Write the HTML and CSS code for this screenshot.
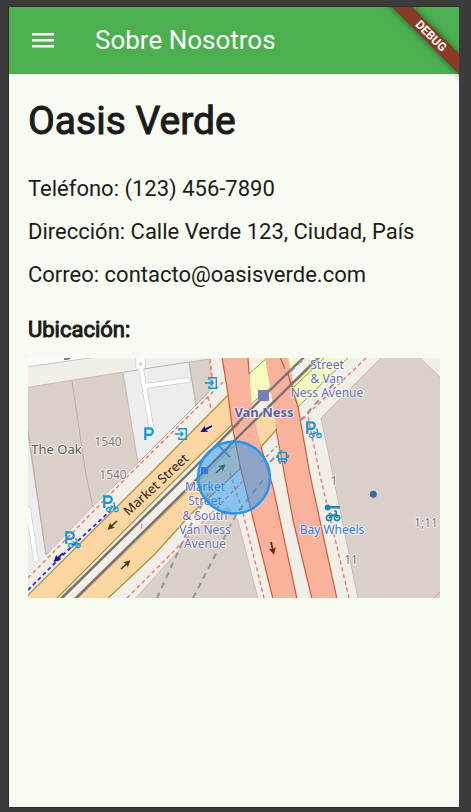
FILE: index.html
```html
<!DOCTYPE html>
<html lang="es">
<head>
<meta charset="utf-8">
<meta name="viewport" content="width=device-width, initial-scale=1">
<title>Sobre Nosotros</title>
<link rel="stylesheet" href="styles.css">
</head>
<body>
<div class="app">
  <header class="app-bar">
    <button class="menu-button" type="button" aria-label="Abrir menú">
      <svg width="22" height="16" viewBox="0 0 22 16" aria-hidden="true"><path d="M0 1h22v2.500H0zM0 7h22v2.500H0zM0 13h22v2.500H0z" fill="#fff"/></svg>
    </button>
    <div class="app-title">Sobre Nosotros</div>
  </header>
  <div class="debug-banner">DEBUG</div>
  <main class="content">
    <h1 class="name">Oasis Verde</h1>
    <div class="details">
      <p>Teléfono: (123) 456-7890</p>
      <p>Dirección: Calle Verde 123, Ciudad, País</p>
      <p>Correo: contacto@oasisverde.com</p>
    </div>
    <h2 class="section-title">Ubicación:</h2>
    <svg class="map" viewBox="28 358 412 240" preserveAspectRatio="xMidYMid slice" role="img" aria-label="Mapa de la ubicación">
      <defs>
        <g id="parking"><path d="M1.300 13V1.300h4.200a3.300 3.300 0 0 1 0 6.600H1.300" fill="none" stroke="#1296db" stroke-width="2.200"/></g>
        <g id="bike" fill="none" stroke="#1296db" stroke-width="1.200"><circle cx="2.800" cy="6.500" r="2.200"/><circle cx="10" cy="6.500" r="2.200"/><path d="M3 6.500 8.500 2.500 10 6.500M4.500 2.500 7 4M8 0l.500 2.500M7 0h2"/></g>
        <g id="entrance" fill="none" stroke="#1296db" stroke-width="1.400"><path d="M4 3V.700h7.300v10.600H4V9M0 6h8M5.500 3.500 8 6 5.500 8.500"/></g>
        <g id="arrow"><path d="M0 0h8" stroke="currentColor" stroke-width="1.700"/><path d="M6-3.500 13 0 6 3.500 7.500 0z" fill="currentColor"/></g>
      </defs>
      <rect x="28" y="358" width="412" height="240" fill="#f2efe9"/>

      <!-- Blocks and buildings -->
      <path d="M27 357h69L27 367z" fill="#fff" stroke="#c9c5c0"/>
      <path d="M28 430 46 555 28 573z" fill="#ededee"/>
      <path d="M124 372 189 362l7 43-58 58z" fill="#ededee"/>
      <g fill="#d9d0c9" stroke="#c9bcb1">
        <path d="M27 387.500 123 372l15 91-46 44-46 48-19-127z"/>
        <path d="M189 362 209 359l4 28-17 18z"/>
        <path d="M321 418 382 357h37l22 21v221h-83l-25-124z"/>
        <path d="M135 599 198 529l30-22 10 14 20 78z"/>
      </g>
      <path d="m72 381 14 94 7 32M28 430l18 125M434 598l6-6" fill="none" stroke="#c2ada1"/>
      <path d="M189 362l7 43M124 372l65-10M209 392l-71 71" fill="none" stroke="#b9b5b1"/>
      <g fill="none" stroke-linecap="round">
        <path d="m140 358 1 10 10 58m-6-40 43-6M28 509l8 51" stroke="#cfcfcf" stroke-width="5.500"/>
        <path d="M140.500 354v12" stroke="#cfcfcf" stroke-width="10"/>
        <path d="M140.500 354v12" stroke="#fff" stroke-width="8.500"/>
        <path d="m140 358 1 10 10 58m-6-40 43-6M28 509l8 51" stroke="#fff" stroke-width="4"/>
      </g>
      <circle cx="140.500" cy="364" r="2" fill="#ded5cf"/>

      <!-- Market Street -->
      <g fill="#fcd6a4" stroke="#b69035" stroke-width="1.300">
        <path d="M20 603 150 474 232 391v34l-37 35L51 604z"/>
        <path d="M66 602 240 435v34l-49 45-36 40-52 49z"/>
        <path d="M250 422 277 397v32l-16 18z"/>
      </g>
      <path d="m249 374 19-17 6 27-25 22z" fill="#f7fabf" stroke="#9b9d36"/>
      <path d="M286 357h63l-51 50-12-15z" fill="#f7fabf" stroke="#9b9d36"/>
      <path d="M288 374 303 357M294 387l31-30" stroke="#8d963a" fill="none"/>
      <path d="M246 430 320 358" fill="none" stroke="#b69035"/>
      <path d="M65 600 236 434 311 358" fill="none" stroke="#f2efe9" stroke-width="9"/>

      <!-- Van Ness Avenue -->
      <g fill="#f9b29c">
        <path d="M222 357h26l4 50 9 40 12 40 24 112h-24l-32-129-9-45-4-31z"/>
        <path d="M265 357h23l10 50 12 68 27 124h-25l-19-79-16-91z"/>
      </g>
      <path d="m222 357 6 37 4 31 9 45 32 129M248 357l1 17m12 73 12 40 24 112M276 429l17 91 19 79M288 374l10 33 12 68 27 124M280 357l5 12" fill="none" stroke="#c95d3d" stroke-width="1.200"/>
      <path d="M55 603 240 423M73 603 240 440" fill="none" stroke="#b69035" stroke-width=".8"/>
      <path d="M59 601 195 467l66-68 43-42M75 599l110-108 50-51 84-83" fill="none" stroke="#747474" stroke-width="2.400"/>

      <!-- Footpaths -->
      <g fill="none" stroke="#fa7268" stroke-width="1.400" stroke-dasharray="4 3">
        <path d="M28 578 133 471 223 382M210 359l3 26m-5 12 4 15"/>
        <path d="M127 598 165 560l38-38 41-42M230 473l13 40 21 85M366 358l-56 54-10 10M308 417l12 58 29 123M261 462l16-16"/>
      </g>
      <path d="m141 529 1-5" stroke="#fa7268"/>
      <path d="M157 598 188 530 209 492M193 598l44-85 26-33M300 421l38-42M270 462l12-12M290 372l14-14" fill="none" stroke="#969594" stroke-width="2" stroke-dasharray="6 5"/>
      <path d="M28 590 65 553l45-42" fill="none" stroke="#2828ff" stroke-width="1.800" stroke-dasharray="4 3"/>

      <!-- Travel directions -->
      <use href="#arrow" color="#120583" transform="translate(212 426) rotate(153)"/>
      <use href="#arrow" color="#120583" transform="translate(63 553) rotate(136)"/>
      <use href="#arrow" color="#513b08" transform="translate(117 521) rotate(137)"/>
      <use href="#arrow" color="#513b08" transform="translate(121 569) rotate(-43)"/>
      <use href="#arrow" color="#513b08" transform="translate(216 473) rotate(-43)"/>
      <use href="#arrow" color="#6c2413" transform="translate(271 542) rotate(77)"/>

      <!-- Place markers -->
      <use href="#parking" x="144" y="427"/>
      <use href="#parking" x="103" y="495"/><use href="#bike" x="106" y="503"/>
      <use href="#parking" x="65" y="531"/><use href="#bike" x="68" y="539"/>
      <use href="#parking" x="306" y="421"/><use href="#bike" x="309" y="429"/>
      <use href="#entrance" x="205" y="377"/>
      <use href="#entrance" x="175" y="428"/>
      <g fill="none" stroke="#1296db" stroke-width="1.500"><rect x="278.500" y="452.500" width="8" height="9" rx="1"/><path d="M278 459h9M277 455v3M288 455v3M280 462v2M285 462v2"/></g>
      <path d="M328 504.500a3 3 0 0 1 2.500 1.500h9.500v2.500h-9.500a3 3 0 1 1-2.500-4z" fill="#1689ad"/>
      <g fill="none" stroke="#1689ad" stroke-width="1.600"><circle cx="329" cy="518" r="2.600"/><circle cx="337" cy="518" r="2.600"/><path d="M329 518l6.500-4 1.500 4M330 513l3 3M334 511h2l1 7"/></g>
      <rect x="258" y="390" width="11" height="11" fill="#7780b5"/>
      <rect x="201" y="467" width="7" height="7" fill="#5360b9"/>
      <path d="m219 446 11 11M230 446l-11 11" stroke="#65676f" stroke-width="1.500"/>
      <circle cx="373.300" cy="494.300" r="3.500" fill="#4964a5"/>
      <path d="M70 357q0 2-3 2h-3" fill="none" stroke="#555" stroke-width="1.500"/>

      <!-- Labels -->
      <g class="label house">
        <text x="56.500" y="454" class="place">The Oak</text>
        <text x="108" y="446">1540</text>
        <text x="113" y="479">1540</text>
        <text x="334" y="485">1</text>
        <text x="351" y="564">11</text>
        <text x="426" y="527">1;11</text>
      </g>
      <text class="label street" transform="translate(159 488) rotate(-43)">Market Street</text>
      <g class="label transit">
        <text x="264" y="417" class="station">Van Ness</text>
        <text x="327" y="369">Street</text>
        <text x="327" y="383">&amp; Van</text>
        <text x="327" y="397">Ness Avenue</text>
        <text x="205" y="491">Market</text>
        <text x="205" y="505">Street</text>
        <text x="205" y="520">&amp; South</text>
        <text x="205" y="534">Van Ness</text>
        <text x="205" y="548">Avenue</text>
      </g>
      <text class="label bikes" x="332" y="534">Bay Wheels</text>

      <circle cx="234" cy="477.500" r="36" fill="#2196f3" fill-opacity=".5" stroke="#2196f3" stroke-width="2.400"/>
    </svg>
  </main>
</div>
</body>
</html>
```
FILE: styles.css
```css
* { box-sizing: border-box; }

body {
  margin: 0;
  min-height: 100vh;
  display: flex;
  padding: 7px 12px 5px 9px;
  background: #3b3b3b;
  color: #1a1c18;
  font-family: Roboto, sans-serif;
}

.app {
  position: relative;
  flex: 1;
  min-width: 0;
  overflow: hidden;
  background: #f8fbf2;
  box-shadow: -1px 0 #2b2b2b, 0 -1px #2f2f2f, 0 1px #2b2b2b;
}

.app-bar {
  display: flex;
  align-items: center;
  gap: 28px;
  height: 67px;
  padding: 0 10px 2px;
  background: #4caf50;
  color: #fff;
}

.menu-button {
  display: grid;
  place-items: center;
  width: 48px;
  height: 48px;
  padding: 0;
  border: 0;
  background: none;
  cursor: pointer;
}

.app-title {
  font-size: 26px;
  line-height: 32px;
}

.debug-banner {
  position: absolute;
  top: 22px;
  right: -32px;
  width: 120px;
  height: 14px;
  transform: rotate(45deg);
  background: #883a24;
  box-shadow: 0 0 7px rgba(0, 0, 0, .5);
  color: #fff;
  font-size: 12px;
  font-weight: 700;
  line-height: 14px;
  text-align: center;
}

.content { padding: 19px; }

.name,
.section-title {
  margin: 0;
  font-weight: 400;
  -webkit-text-stroke: 1px currentColor;
}

.name {
  font-size: 39px;
  line-height: 56px;
}

.details {
  display: grid;
  gap: 12px;
  margin: 24px 0;
  font-size: 22px;
  line-height: 31px;
}

.details p { margin: 0; }

.section-title {
  font-size: 22px;
  line-height: 32px;
}

.map {
  display: block;
  width: 100%;
  margin-top: 12px;
}

.label {
  font-family: "Noto Sans", sans-serif;
  font-size: 12px;
  text-anchor: middle;
  paint-order: stroke;
  stroke: rgba(255, 255, 255, .7);
  stroke-width: 2px;
  stroke-linejoin: round;
}

.house { fill: #7d7978; }
.place { fill: #5b5857; font-size: 13px; }
.street { fill: #2c210e; font-size: 13px; stroke: none; }
.transit { fill: #6670b9; }
.station { fill: #5860ad; font-size: 13px; font-weight: 700; }
.bikes { fill: #3478ee; }
```
